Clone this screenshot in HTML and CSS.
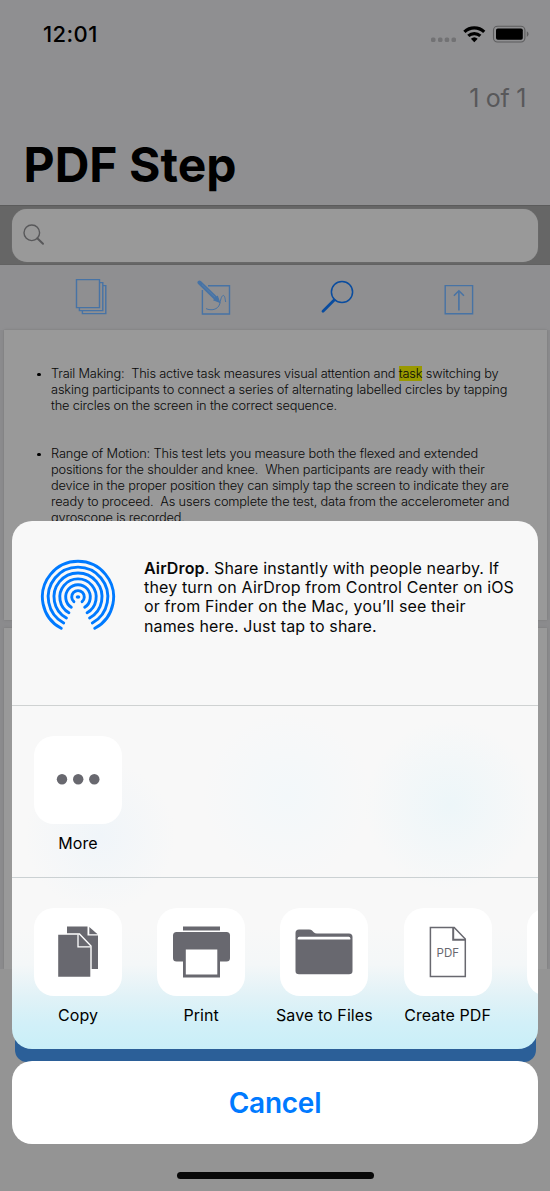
FILE: index.html
```
<!DOCTYPE html>
<html lang="en">
<head>
<meta charset="utf-8">
<title>PDF Step</title>
<link rel="stylesheet" href="styles.css">
</head>
<body>
<div class="phone">
  <header class="header">
    <div class="status">
      <span class="time">12:01</span>
      <svg class="status-icons" width="100" height="20" viewBox="0 0 100 20">
        <g fill="#727274"><rect x="1" y="12.5" width="4.5" height="4.5" rx="1.6"/><rect x="8" y="12.5" width="4.5" height="4.5" rx="1.6"/><rect x="14.7" y="12.5" width="4.5" height="4.5" rx="1.6"/><rect x="21.5" y="12.5" width="4.5" height="4.5" rx="1.6"/></g>
        <g fill="none" stroke="#000" stroke-width="3.2"><path d="M34.4 6.9A14.2 14.2 0 0 1 54.2 6.9"/><path d="M38.3 10.9A8.8 8.8 0 0 1 50.3 10.9"/></g>
        <path d="M44.3 17.3L40.9 13.8A5 5 0 0 1 47.7 13.8Z"/>
        <rect x="63.5" y="1.2" width="31.4" height="15.8" rx="4" fill="none" stroke="#5d5d5e" stroke-width="1.1"/>
        <rect x="66" y="3.5" width="26.8" height="11.2" rx="1.8"/>
        <path d="M96.8 6.3Q98.6 7.3 98.6 9.1T96.8 11.9Z" fill="#5d5d5e"/>
      </svg>
    </div>
    <div class="counter">1 of 1</div>
    <h1 class="title">PDF Step</h1>
  </header>
  <div class="search">
    <div class="field">
      <svg width="24" height="24" viewBox="0 0 24 24" fill="none" stroke="#58585a"><circle cx="9.8" cy="9.8" r="7.8" stroke-width="1.4"/><path d="M15.3 15.3L21 20.7" stroke-width="2" stroke-linecap="round"/></svg>
    </div>
  </div>
  <nav class="tools">
    <svg width="34" height="38" viewBox="0 0 34 38" fill="none" stroke="#4773a5" stroke-width="1.4"><path d="M2.5 1.6H25.5V29.6H2.5Z"/><path d="M26 4.6H28.8V32.6H5.4V30M29 7.6H31.8V35.6H8.4V33"/></svg>
    <svg width="34" height="38" viewBox="0 0 34 38" fill="none" stroke="#4773a5" stroke-width="1.2"><path d="M11 7.7H32.5V36H5.4V12" stroke-width="1.4"/><path d="M2.5 4.5L18.5 20" stroke-width="4" stroke-linecap="round"/><path d="M17 22L22.5 24.2L20.5 18.5Z" fill="#4773a5"/><path d="M5 6.6L18 19.2" stroke="#6586ac" stroke-width=".6"/><path d="M9 30.6C14 33 21 31.8 22.7 26C23.5 23 24 18 26.3 17.4C28 17.6 28 21 28.7 24" stroke-width="1"/></svg>
    <svg width="34" height="38" viewBox="0 0 34 38" fill="none" stroke="#094c9f"><circle cx="22" cy="14" r="10.6" stroke-width="1.5"/><path d="M14.2 22L3 33.2" stroke-width="2.8" stroke-linecap="round"/></svg>
    <svg width="34" height="38" viewBox="0 0 34 38" fill="none" stroke="#4773a5" stroke-width="1.4"><path d="M3.2 7.6H30.6V35.7H3.2Z"/><path d="M16.9 32.5V13" stroke-width="1.6"/><path d="M11.9 17.8L16.9 12.8L21.9 17.8" stroke-width="1.6"/></svg>
  </nav>
  <main class="viewer">
    <article class="page first">
      <ul class="notes">
        <li><span class="l1">Trail Making:&nbsp; This active task measures visual attention and <mark>task</mark> switching by</span><span class="l2">asking participants to connect a series of alternating labelled circles by tapping</span><span class="l3">the circles on the screen in the correct sequence.</span></li>
        <li><span class="l4">Range of Motion: This test lets you measure both the flexed and extended</span><span class="l5">positions for the shoulder and knee.&nbsp; When participants are ready with their</span><span class="l6">device in the proper position they can simply tap the screen to indicate they are</span><span class="l7">ready to proceed.&nbsp; As users complete the test, data from the accelerometer and</span><span class="l8">gyroscope is recorded.</span></li>
      </ul>
    </article>
    <article class="page second"></article>
  </main>
  <footer class="bottom"><div class="action"></div></footer>

  <div class="overlay">
    <section class="sheet">
      <div class="airdrop">
        <svg width="76" height="76" viewBox="-38 -38 76 76" fill="none" stroke="#007aff" stroke-width="2.9" stroke-linecap="round"><path d="M-16.8 31.3A35.6 35.6 0 1 1 16.8 31.3"/><path d="M-14.3 26.1A29.8 29.8 0 1 1 14.3 26.1"/><path d="M-11.6 21A24 24 0 1 1 11.6 21"/><path d="M-9.1 15.8A18.2 18.2 0 1 1 9.1 15.8"/><path d="M-6.7 10.3A12.3 12.3 0 1 1 6.7 10.3"/><path d="M-4.1 4.7A6.3 6.3 0 1 1 4.1 4.7"/><ellipse rx="2.3" ry="1.8" fill="#007aff" stroke="none"/></svg>
        <p class="blurb"><span class="b1"><b>AirDrop</b>. Share instantly with people nearby. If</span><span class="b2">they turn on AirDrop from Control Center on iOS</span><span class="b3">or from Finder on the Mac, you’ll see their</span><span class="b4">names here. Just tap to share.</span></p>
      </div>
      <div class="row apps">
        <div class="item"><div class="tile"><svg width="88" height="88" fill="#68686f"><circle cx="28" cy="43.3" r="5.2"/><circle cx="44.2" cy="43.3" r="5.2"/><circle cx="60.3" cy="43.3" r="5.2"/></svg></div><span>More</span></div>
      </div>
      <div class="row actions">
        <div class="item"><div class="tile"><svg width="88" height="88"><path d="M33 18.5H53.5V27.5H64V61H33Z" fill="#68686f"/><path d="M55.3 19L63.6 26.3H55.3Z" fill="#68686f"/><path d="M23.5 26H45.5L57 38V69.5H23.5Z" fill="#68686f" stroke="#fff" stroke-width="1.4"/><path d="M44 26.5V38.8H56.5" fill="none" stroke="#fff" stroke-width="1.3"/></svg></div><span>Copy</span></div>
        <div class="item"><div class="tile"><svg width="88" height="88" fill="#68686f"><path d="M26 18.5H63V22.5H26Z"/><rect x="16" y="24" width="57" height="29.5" rx="3.5"/><path d="M26 40H63V69.5H26Z"/><path d="M28.8 41.5H60.3V66.5H28.8Z" fill="#fff"/></svg></div><span>Print</span></div>
        <div class="item"><div class="tile"><svg width="88" height="88"><path d="M15.5 25Q15.5 21.5 19 21.5H29C32 21.5 32.5 23 34 24.5Q35 25.5 37 25.5H69Q72.5 25.5 72.5 29V63Q72.5 66.3 69 66.3H19Q15.5 66.3 15.5 63Z" fill="#68686f"/><path d="M17.7 31.6V30.2Q17.7 28.7 19.2 28.7H68.8Q70.3 28.7 70.3 30.2V31.6Z" fill="#fff"/></svg></div><span>Save to Files</span></div>
        <div class="item"><div class="tile"><svg width="88" height="88" fill="none" stroke="#68686f" stroke-width="1.5"><path d="M26.4 19.4H50.2L61.3 31V68.4H26.4Z"/><path d="M49.2 19.4V31.8H61.3" stroke-width="2"/><text class="pdf" x="32.6" y="48.8" fill="#68686f" stroke="none">PDF</text></svg></div><span>Create PDF</span></div>
        <div class="item"><div class="tile"></div></div>
      </div>
    </section>
    <div class="cancel">Cancel</div>
    <div class="home"></div>
  </div>
</div>
</body>
</html>
```
FILE: styles.css
```
* { box-sizing: border-box; }
body { margin: 0; font-family: Inter, "Liberation Sans", sans-serif; background: #949494; overflow: hidden; }
.phone { position: relative; width: 550px; height: 1191px; overflow: hidden; display: flex; flex-direction: column; }
svg { display: block; flex: none; }
.header { height: 205px; background: #8f8f91; display: flex; flex-direction: column; }
.status { height: 68px; padding: 0 20px 0 43px; display: flex; justify-content: space-between; align-items: center; }
.time { font-size: 22px; font-weight: 500; letter-spacing: .4px; }
.status-icons { margin-top: 1px; }
.counter { height: 60px; line-height: 60px; padding-right: 24px; text-align: right; color: #58585a; font-size: 25px; font-weight: 400; letter-spacing: -.3px; }
.title { margin: 0; padding-left: 23.5px; font-size: 48px; line-height: 74px; font-weight: 700; letter-spacing: .05px; }
.search { height: 60px; padding: 3px 12px 3px; background: #666; border-top: 1px solid #5b5b5b; border-bottom: 1px solid #626262; }
.field { height: 53px; border-radius: 15px; background: #999; padding: 14px 10px; box-shadow: 0 0 1px #858585; }
.tools { height: 65px; background: #8f8f91; padding: 13px 73.5px 0 74px; display: flex; justify-content: space-between; }
.viewer { height: 639px; background: #8b8b8d; padding: 0 3px 0 4px; display: flex; flex-direction: column; gap: 8px; }
.page { background: #999; box-shadow: 0 0 2px #777; }
.first { height: 290px; padding-top: 36px; }
.second { height: 341px; }
.notes { list-style: none; margin: 0; padding: 0 0 0 47px; display: flex; flex-direction: column; gap: 32px; font-size: 12.8px; line-height: 16px; font-weight: 300; color: #080808; }
.notes li { position: relative; }
.notes li::before { content: ""; position: absolute; left: -14px; top: 6.5px; width: 3.6px; height: 3.6px; border-radius: 50%; background: #000; }
.notes span { display: block; white-space: nowrap; width: max-content; }
.notes mark { background: #999900; color: inherit; }
.l1 { letter-spacing: -.18px; }
.l2 { letter-spacing: -.15px; }
.l3 { letter-spacing: -.175px; }
.l4 { letter-spacing: -.155px; }
.l5, .l7, .l8 { letter-spacing: -.17px; }
.l6 { letter-spacing: -.175px; }
.bottom { flex: 1; background: #949494; padding: 0 14.5px; }
.action { height: 93px; border-radius: 12px; background: #2b5f98; }
.overlay { position: absolute; inset: 521px 12px 0; display: flex; flex-direction: column; align-items: center; }
.sheet { width: 526px; height: 528px; border-radius: 20px; overflow: hidden; background: radial-gradient(circle at 438px 284px, #edf6f9 0, #edf6f900 85px), radial-gradient(circle at 88px 315px, #f0f5f9 0, #f0f5f900 75px), radial-gradient(circle at 275px 275px, #f3f8fa 0, #f3f8fa00 85px), linear-gradient(#f8f8f8 0 77%, #f4f7f8 84%, #e1f2f7 90%, #d2f0f8 95%, #c9eff8 100%); }
.airdrop { height: 185px; padding: 38px 0 0 28px; display: flex; gap: 28px; border-bottom: 1px solid #cfd2d2; }
.blurb { margin: 0; font-size: 16px; line-height: 19.2px; color: #080808; }
.blurb span { display: block; white-space: nowrap; width: max-content; letter-spacing: .13px; }
.blurb .b2 { letter-spacing: .15px; }
.blurb b { font-weight: 600; }
.row { display: flex; gap: 35.2px; padding: 30px 0 0 22px; }
.apps { height: 172px; border-bottom: 1px solid #cbd1d3; }
.item { flex: none; width: 88px; display: flex; flex-direction: column; align-items: center; gap: 9px; }
.tile { width: 88px; height: 88px; border-radius: 20px; background: #fff; flex: none; }
.item span { font-size: 16px; line-height: 20px; white-space: nowrap; letter-spacing: .08px; }
.pdf { font-size: 11.5px; font-weight: 400; }
.cancel { margin-top: 12px; width: 526px; height: 83px; border-radius: 20px; background: #fff; color: #007aff; font-size: 28px; line-height: 85px; text-align: center; font-weight: 600; letter-spacing: -.25px; flex: none; }
.home { margin-top: 28px; width: 197px; height: 7px; border-radius: 4px; background: #080808; flex: none; }
```
